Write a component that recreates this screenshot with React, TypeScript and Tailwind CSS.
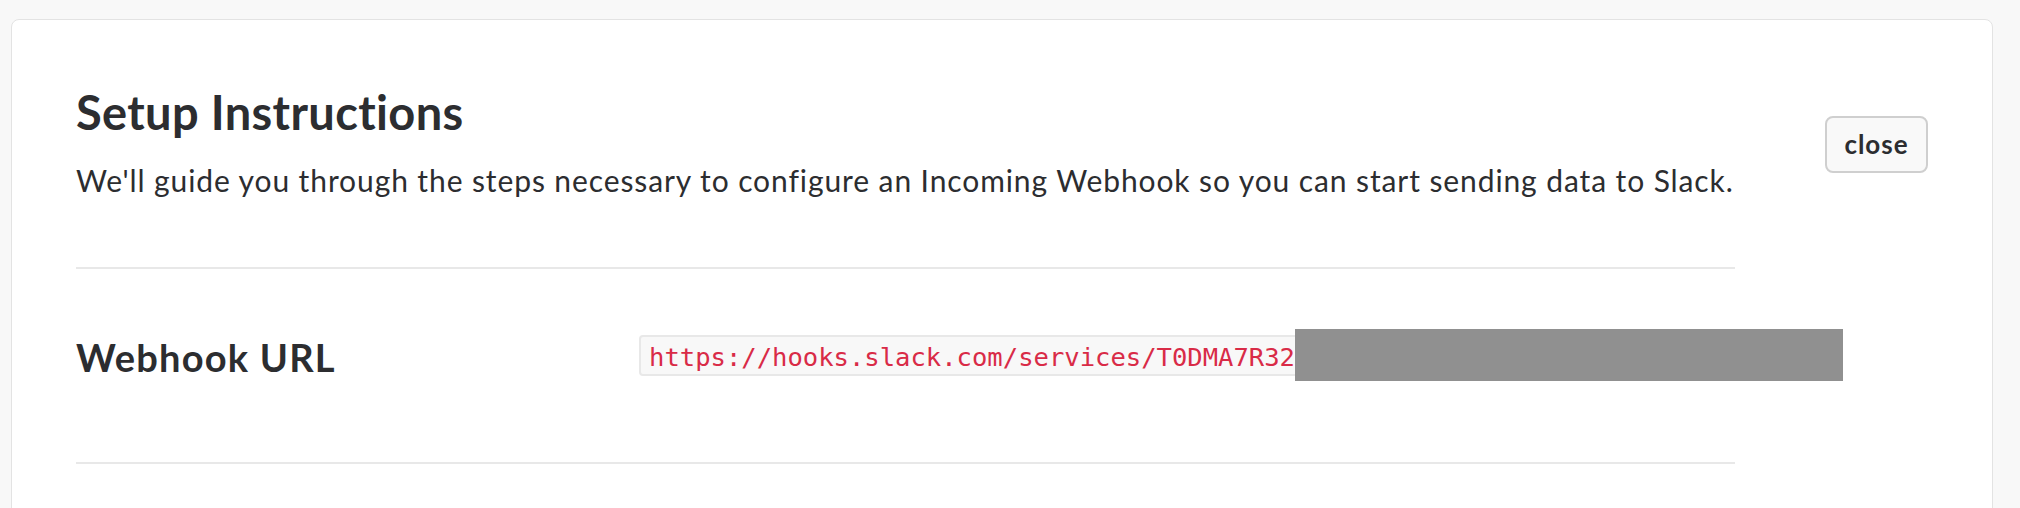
import React from "react";

const WEBHOOK_URL = "https://hooks.slack.com/services/T0DMA7R32";

function Divider() {
	return <div className="h-[2px] w-[1659px] bg-[#e8e8e8]" />;
}

function SetupHeader() {
	return (
		<div className="flex items-start justify-between">
			<div>
				<h2 className="text-[47px] leading-[1.2] font-bold tracking-[0.35px] text-[#2c2d30]">
					Setup Instructions
				</h2>
				<p className="mt-[22px] text-[30px] leading-[1.2] tracking-[0.9px] text-[#2c2d30] whitespace-nowrap">
					We'll guide you through the steps necessary to configure an Incoming
					Webhook so you can start sending data to Slack.
				</p>
			</div>
			<button
				type="button"
				className="mt-[32px] h-[57px] w-[103px] rounded-[8px] border-2 border-[#cfcfcf] bg-[#f9f9f9] text-[26px] font-bold tracking-[1px] text-[#2c2d30]"
			>
				close
			</button>
		</div>
	);
}

function WebhookRow() {
	return (
		<div className="flex items-start pt-[66px] pb-[81px]">
			<div className="w-[563px] shrink-0 text-[38px] leading-[1.2] font-bold tracking-[1.2px] text-[#2c2d30]">
				Webhook URL
			</div>
			<div className="relative">
				<code
					className="block w-[1150px] rounded-[4px] border-2 border-[#e8e8e8] bg-[#f8f8f8] pl-[8px] pt-[5px] pb-[1px] text-[25.55px] leading-[31px] text-[#d92b47] whitespace-nowrap"
					style={{ fontFamily: '"DejaVu Sans Mono", monospace' }}
				>
					{WEBHOOK_URL}/B0000000/XXXXXXXXXXXXXXXXXXXXXXXX
				</code>
				{/* redacted token */}
				<div className="absolute left-[656px] -top-[6px] h-[52px] w-[548px] bg-[#909090]" />
			</div>
		</div>
	);
}

export default function App() {
	return (
		<div
			className="min-h-screen bg-[#f8f8f8] pt-[19px] pl-[11px] pr-[27px]"
			style={{ fontFamily: 'Lato, "Liberation Sans", sans-serif' }}
		>
			<div className="min-h-[600px] rounded-[8px] border border-[#e3e3e3] bg-white px-16 pt-16">
				<SetupHeader />
				<div className="mt-[69px]">
					<Divider />
				</div>
				<WebhookRow />
				<Divider />
			</div>
		</div>
	);
}
